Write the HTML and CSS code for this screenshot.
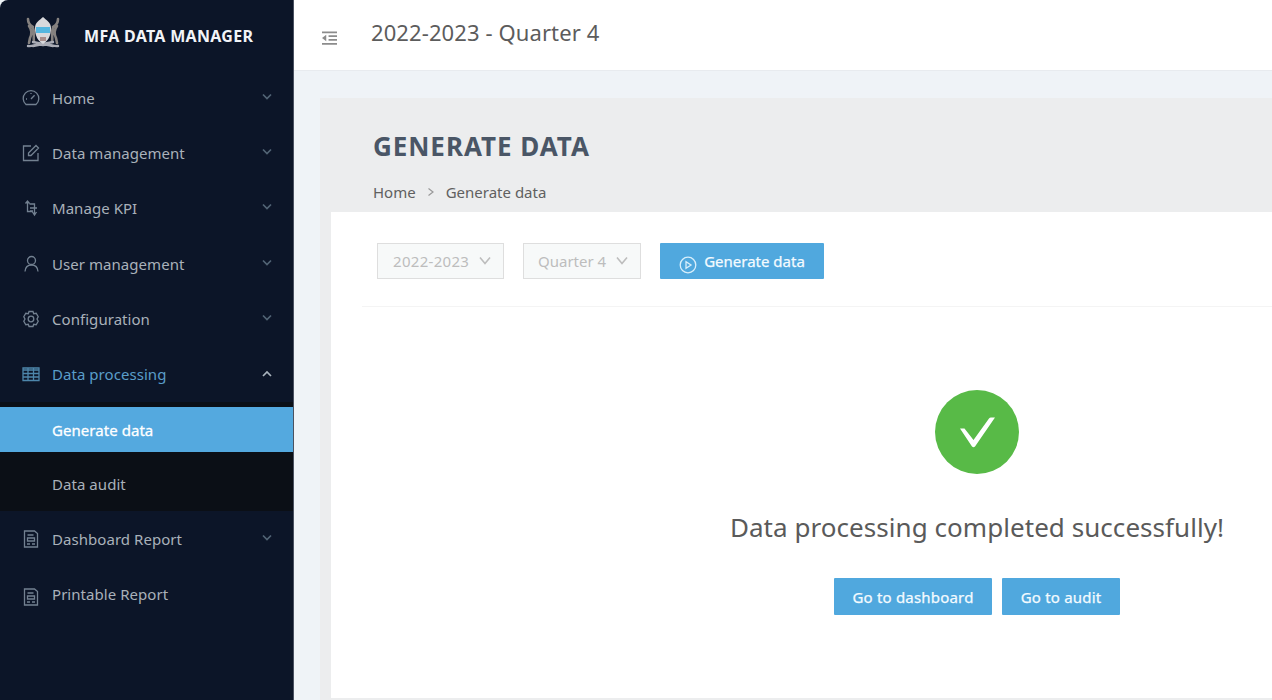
FILE: index.html
```html
<!DOCTYPE html>
<html lang="en">
<head>
<meta charset="utf-8">
<title>MFA Data Manager</title>
<link rel="stylesheet" href="styles.css">
</head>
<body>
<div class="app">
  <aside class="sidebar">
    <div class="brand">
      <svg class="crest" viewBox="0 0 34 32">
        <g fill="none" stroke-linecap="round">
          <path d="M2 2c0 4 1 6 5 8M3 9c3 4 3 8 1 12l-1 5M7 11c2 4 0 9 1 14M32 2c0 4-1 6-5 8M31 9c-3 4-3 8-1 12l1 5M27 11c-2 4 0 9-1 14" stroke="#85817f" stroke-width="2.600"/>
          <path d="M2 29c5 1 8-3 15-1 7-2 10 2 15 1M7 25l20 4M27 25L7 29" stroke="#a9abb5" stroke-width="2.400"/>
        </g>
        <path d="M17 0c3 3 8 5 8 11 0 8-3 13-8 16-5-3-8-8-8-16 0-6 5-8 8-11z" fill="#d9d9dc"/>
        <path d="M10 10h14v6H10z" fill="#55b6df"/>
        <path d="M14 20h6v4h-6z" fill="#a98f8c"/>
      </svg>
      <span class="brand-name">MFA DATA MANAGER</span>
    </div>
    <nav class="menu">
      <a class="item"><svg class="icon" viewBox="0 0 18 18"><path d="M4 15.500a7.800 7.800 0 1 1 10 0zM9 10l3.600-3.800M4 10h1M9 4v1"/></svg><span class="label">Home</span><svg class="chev" viewBox="0 0 12 8"><path d="M2 1.500L6 5.500l4-4"/></svg></a>
      <a class="item"><svg class="icon" viewBox="0 0 18 18"><path d="M9 2H1.500v14.500h14.500V9M6.500 11.500V9L14 1.500l2.500 2.500L9 11.500z"/></svg><span class="label">Data management</span><svg class="chev" viewBox="0 0 12 8"><path d="M2 1.500L6 5.500l4-4"/></svg></a>
      <a class="item"><svg class="icon" viewBox="0 0 18 18"><path d="M5.500 3v9.500h5M3.500 4.500l2-2.500 2 2.500M7.500 5h5v10M10.500 13l2 3 2-3M8 9h7M8 12h3"/></svg><span class="label">Manage KPI</span><svg class="chev" viewBox="0 0 12 8"><path d="M2 1.500L6 5.500l4-4"/></svg></a>
      <a class="item"><svg class="icon" viewBox="0 0 18 18"><circle cx="9.500" cy="5.500" r="4"/><path d="M3 16.500c.3-4 3-6.500 6.500-6.500s6.200 2.500 6.500 6.500"/></svg><span class="label">User management</span><svg class="chev" viewBox="0 0 12 8"><path d="M2 1.500L6 5.500l4-4"/></svg></a>
      <a class="item"><svg class="icon" viewBox="0 0 18 18"><path d="M7 1.500h4l.7 2.200 2.500-.4 2 3.500L15 9l1.200 2.200-2 3.500-2.500-.4-.7 2.200H7l-.7-2.200-2.500.4-2-3.500L3 9 1.800 6.800l2-3.500 2.500.4z"/><circle cx="9" cy="9" r="2.800"/></svg><span class="label">Configuration</span><svg class="chev" viewBox="0 0 12 8"><path d="M2 1.500L6 5.500l4-4"/></svg></a>
      <a class="item open"><svg class="icon" viewBox="0 0 18 18"><path d="M1 3h16v12.500H1zM1 5h16M1 8.500h16M1 12h16M6 3v12.500M11.500 3v12.500"/></svg><span class="label">Data processing</span><svg class="chev" viewBox="0 0 12 8"><path d="M2 6l4-4 4 4"/></svg></a>
      <div class="submenu">
        <a class="subitem active"><span class="label">Generate data</span></a>
        <a class="subitem audit"><span class="label">Data audit</span></a>
      </div>
      <a class="item"><svg class="icon" viewBox="0 0 18 18"><path d="M2.500 1h10l3 2.500V17h-13zM5.500 5h6M5.500 8h7v3h-7zM5 14h3M10 14h3"/></svg><span class="label">Dashboard Report</span><svg class="chev" viewBox="0 0 12 8"><path d="M2 1.500L6 5.500l4-4"/></svg></a>
      <a class="item last"><svg class="icon" viewBox="0 0 18 18"><path d="M2.500 1h10l3 2.500V17h-13zM5.500 5h6M5.500 8h7v3h-7zM5 14h3M10 14h3"/></svg><span class="label">Printable Report</span></a>
    </nav>
  </aside>
  <main class="main">
    <header class="topbar">
      <svg class="fold" viewBox="0 0 16 16"><path d="M0 1.500h16M7 5.500h9M7 9.500h9M0 13.800h16"/><path class="tri" d="M0 7.500l4.500-3.500v7z"/></svg>
      <span class="period">2022-2023 - Quarter 4</span>
    </header>
    <section class="page">
      <div class="page-head">
        <h1 class="title">GENERATE DATA</h1>
        <div class="crumbs"><span>Home</span><svg class="sep" viewBox="0 0 8 10"><path d="M1.500 1.500L6 5 1.500 8.500"/></svg><span>Generate data</span></div>
      </div>
      <div class="card">
        <div class="filters">
          <div class="select year"><span>2022-2023</span><svg class="arrow" viewBox="0 0 12 10"><path d="M1 1.500L6 7.500l5-6"/></svg></div>
          <div class="select quarter"><span>Quarter 4</span><svg class="arrow" viewBox="0 0 12 10"><path d="M1 1.500L6 7.500l5-6"/></svg></div>
          <button class="btn generate"><svg class="play" viewBox="0 0 18 18"><circle cx="9" cy="9" r="7.800"/><path d="M7 5.800v6.400L12 9z"/></svg><span>Generate data</span></button>
        </div>
        <div class="result">
          <svg class="done" viewBox="0 0 84 84"><circle cx="42" cy="42" r="42"/><path d="M25 38.500h4.500L38.500 50 54 28.500q.7-1 2-1h4L40 56.500q-1.500 1.500-3 0z"/></svg>
          <div class="message">Data processing completed successfully!</div>
          <div class="actions">
            <button class="btn to-dash">Go to dashboard</button>
            <button class="btn to-audit">Go to audit</button>
          </div>
        </div>
      </div>
    </section>
  </main>
</div>
</body>
</html>
```
FILE: styles.css
```css
* { box-sizing: border-box; }
body { margin: 0; font-family: "Noto Sans", "Open Sans", sans-serif; overflow: hidden; }
.app { display: flex; width: 1272px; height: 700px; background: #eff3f7; }
.sidebar { width: 294px; flex: none; background: #0c1528; border-right: 1px solid #4b5261; border-top-left-radius: 8px; }
.brand { height: 70px; padding: 17px 0 0 26px; display: flex; align-items: flex-start; }
.crest { width: 34px; height: 32px; margin-right: 24px; }
.brand-name { font-weight: 700; font-size: 16px; line-height: 20px; padding-top: 9px; color: #f2f4f8; white-space: nowrap; letter-spacing: .3px; }
.menu { display: flex; flex-direction: column; }
.item { display: flex; align-items: center; height: 55.350px; padding: 0 20px 0 22px; color: #a9b1ba; }
.icon { width: 18px; height: 18px; margin-right: 12px; fill: none; stroke: #738191; stroke-width: 1.300; }
.label { font-size: 15px; line-height: 20px; white-space: nowrap; letter-spacing: .05px; }
.chev { width: 12px; height: 8px; margin-left: auto; margin-top: -2px; fill: none; stroke: #526475; stroke-width: 1.700; }
.open { color: #5a9dc8; }
.open .icon { stroke: #4d86ab; }
.open .chev { stroke: #aab4be; margin-top: 0; }
.submenu { background: #0b0f16; padding-top: 5px; height: 109px; }
.subitem { display: flex; align-items: center; height: 45px; padding-left: 52px; color: #a9b1ba; }
.active { background: #54a9df; color: #fff; -webkit-text-stroke: .3px #fff; }
.audit { height: 64px; }
.last .icon { margin-top: 5px; }
.main { flex: 1; min-width: 0; display: flex; flex-direction: column; }
.topbar { height: 71px; background: #fff; border-bottom: 1px solid #e8ebef; display: flex; align-items: flex-start; padding: 18px 0 0 28px; }
.fold { width: 15px; height: 15px; margin: 13px 34px 0 0; fill: none; stroke: #8c8c8c; stroke-width: 1.800; }
.fold .tri { fill: #8c8c8c; stroke: none; }
.period { font-size: 22px; line-height: 28px; color: #5c5c5c; white-space: nowrap; letter-spacing: .1px; }
.page { margin: 27px 0 0 26px; background: #ecedee; flex: 1; display: flex; flex-direction: column; padding: 0 0 2px 11px; }
.page-head { height: 114px; padding: 33px 0 0 42px; }
.title { margin: 0; font-size: 26px; line-height: 30px; font-weight: 700; color: #4a5666; white-space: nowrap; letter-spacing: .95px; }
.crumbs { display: flex; align-items: center; margin-top: 21px; height: 20px; font-size: 15px; color: #606060; white-space: nowrap; }
.sep { width: 8px; height: 10px; margin: 0 11px 0 11px; fill: none; stroke: #999; stroke-width: 1.200; }
.card { background: #fff; flex: 1; padding: 31px 0 0 31px; }
.filters { display: flex; height: 64px; padding-left: 15px; border-bottom: 1px solid #f4f4f4; }
.select { display: flex; align-items: center; height: 36px; border: 1px solid #dedede; background: #f7f9f9; color: #bdbdbd; font-size: 15px; padding: 0 12px 0 15px; justify-content: space-between; white-space: nowrap; }
.year { width: 127px; margin-right: 19px; letter-spacing: .3px; }
.quarter { width: 118px; margin-right: 19px; padding-left: 14px; }
.arrow { width: 12px; height: 10px; fill: none; stroke: #bdbdbd; stroke-width: 1.600; }
.btn { display: flex; align-items: center; justify-content: center; border: 0; border-radius: 1px; background: #50a8de; color: #f4fbff; font-family: inherit; font-size: 15px; padding: 0; height: 37px; white-space: nowrap; -webkit-text-stroke: .25px #f4fbff; letter-spacing: .2px; }
.generate { width: 164px; height: 36px; letter-spacing: 0; }
.play { width: 18px; height: 18px; margin: 8px 7px 0 0; fill: none; stroke: #d9effb; stroke-width: 1.300; }
.result { display: flex; flex-direction: column; align-items: center; padding: 83px 0 0 320px; }
.done { width: 84px; height: 84px; fill: #58ba47; }
.done path { fill: #fff; }
.message { font-size: 26px; line-height: 36px; color: #5a5a5a; margin-top: 35px; white-space: nowrap; letter-spacing: .05px; }
.actions { display: flex; gap: 10px; margin-top: 33px; }
.to-dash { width: 158px; }
.to-audit { width: 118px; }
```
